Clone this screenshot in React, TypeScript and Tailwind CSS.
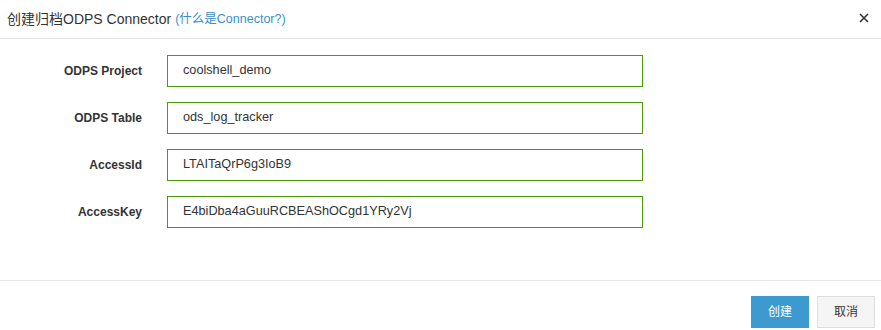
const fields = [
  { label: 'ODPS Project', value: 'coolshell_demo' },
  { label: 'ODPS Table', value: 'ods_log_tracker' },
  { label: 'AccessId', value: 'LTAITaQrP6g3IoB9' },
  { label: 'AccessKey', value: 'E4biDba4aGuuRCBEAShOCgd1YRy2Vj' },
];

export default function App() {
  return (
    <div
      className="w-[881px] h-[330px] bg-white flex flex-col text-[#333]"
      style={{ fontFamily: '"Liberation Sans", Arial, "Noto Sans CJK SC", sans-serif' }}
    >
      <div className="h-[39px] border-b border-[#e5e5e5] flex items-center pl-[7px] pr-[10px] shrink-0">
        <span className="text-[14px] text-[#333]">创建归档ODPS Connector</span>
        <a className="ml-[4px] text-[12.5px] text-[#3a8fd0] mt-[1px]">(什么是Connector?)</a>
        <button className="ml-auto text-[#333] flex items-center justify-center w-[14px] h-[14px] mt-[-2px]">
          <svg width="10" height="10" viewBox="0 0 10 10">
            <path d="M1 1L9 9M9 1L1 9" stroke="#333" strokeWidth="1.6" />
          </svg>
        </button>
      </div>

      <div className="flex-1 flex flex-col gap-[15px] pt-[16px]">
        {fields.map((f) => (
          <div key={f.label} className="flex items-center">
            <label className="w-[142px] text-right text-[12px] font-bold text-[#333]">
              {f.label}
            </label>
            <div className="ml-[25px] w-[476px] h-[32px] border border-[#4a9a0a] flex items-center pl-[15px] text-[12.7px] text-[#333]">
              {f.value}
            </div>
          </div>
        ))}
      </div>

      <div className="h-[50px] border-t border-[#e5e5e5] flex items-start justify-end gap-[8px] pr-[6px] pt-[15px] shrink-0">
        <button className="w-[58px] h-[32px] bg-[#3c9ad0] text-white text-[12px]">创建</button>
        <button className="w-[58px] h-[32px] bg-[#f5f5f5] border border-[#dddddd] text-[#333] text-[12px]">
          取消
        </button>
      </div>
    </div>
  );
}
